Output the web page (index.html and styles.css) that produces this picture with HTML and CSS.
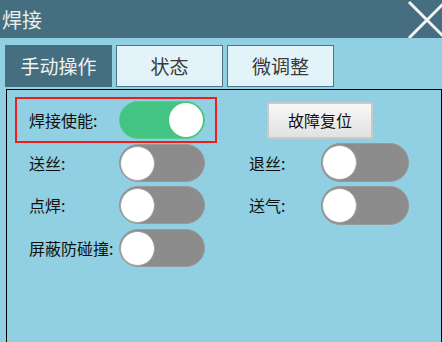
FILE: index.html
```html
<!DOCTYPE html>
<html lang="zh-CN">

<head>
    <meta charset="UTF-8">
    <title>焊接</title>
    <link rel="stylesheet" href="styles.css">
</head>

<body>
    <div class="titlebar">
        <span class="title">焊接</span>
        <svg class="close" width="35" height="38" viewBox="0 0 35 38">
            <line x1="2" y1="2" x2="38" y2="38" />
            <line x1="38" y1="2" x2="2" y2="38" />
        </svg>
    </div>

    <div class="tabs">
        <a href="javascript:;" class="tab tab_on">手动操作</a>
        <a href="javascript:;" class="tab">状态</a>
        <a href="javascript:;" class="tab">微调整</a>
    </div>

    <div class="panel">
        <div class="row row_l hl">
            <span class="label">焊接使能:</span>
            <span class="switch on"><i></i></span>
        </div>
        <div class="row row_r">
            <a href="javascript:;" class="btn">故障复位</a>
        </div>

        <div class="row row_l">
            <span class="label">送丝:</span>
            <span class="switch"><i></i></span>
        </div>
        <div class="row row_r">
            <span class="label">退丝:</span>
            <span class="switch"><i></i></span>
        </div>

        <div class="row row_l">
            <span class="label">点焊:</span>
            <span class="switch"><i></i></span>
        </div>
        <div class="row row_r">
            <span class="label">送气:</span>
            <span class="switch"><i></i></span>
        </div>

        <div class="row row_l">
            <span class="label">屏蔽防碰撞:</span>
            <span class="switch"><i></i></span>
        </div>
    </div>
</body>

</html>
```

FILE: styles.css
```css
* {
    padding: 0;
    margin: 0;
    box-sizing: border-box;
}

a {
    text-decoration: none;
}

body {
    width: 442px;
    height: 342px;
    overflow: hidden;
    background-color: #90d0e2;
    font-family: "Noto Sans CJK SC", "Noto Sans", sans-serif;
    color: #111;
}

.titlebar {
    display: flex;
    justify-content: space-between;
    align-items: center;
    height: 38px;
    background-color: #456f80;
}

.title {
    padding-left: 2px;
    font-size: 20px;
    color: #ececec;
}

.close {
    display: block;
    align-self: flex-start;
}

.close line {
    stroke: #f4f4f4;
    stroke-width: 3;
}

.tabs {
    display: flex;
    gap: 4px;
    margin-top: 7px;
    padding-left: 5px;
}

.tab {
    width: 107px;
    height: 42px;
    line-height: 40px;
    text-align: center;
    font-size: 19px;
    color: #3a3a3a;
    background-color: #e2f3f9;
    border: 1px solid #4d7585;
}

.tab_on {
    color: #f2f2f2;
    background-color: #456f80;
    border-color: #456f80;
}

/* 面板底边在窗口外 */
.panel {
    display: grid;
    grid-template-columns: 194px 1fr;
    grid-auto-rows: 38px;
    column-gap: 26px;
    row-gap: 4.5px;
    width: 436px;
    height: 253px;
    margin: 2px 0 0 6px;
    padding: 11px 0 0 12px;
    border: 1px solid #000;
    border-bottom: none;
}

.row {
    display: flex;
    align-items: center;
}

.row_l {
    grid-column: 1;
}

.row_r {
    grid-column: 2;
}

.hl {
    outline: 2px solid #ee1c1c;
    outline-offset: 2px;
}

.label {
    padding-left: 10px;
    font-size: 16px;
}

.row_l .label {
    width: 100px;
}

.row_r .label {
    width: 82px;
}

.btn {
    width: 106px;
    height: 37px;
    margin-left: 28px;
    line-height: 33px;
    text-align: center;
    font-size: 16px;
    color: #111;
    border: 2px solid #c9c9c9;
    border-radius: 2px;
    background: linear-gradient(#f7f7f7, #e2e2e2);
}

.switch {
    position: relative;
    display: block;
    width: 86px;
    height: 38px;
    border-radius: 19px;
    border: 1px solid #999;
    background-color: #8c8c8c;
}

.row_r .switch {
    width: 88px;
    height: 39px;
}

.switch i {
    position: absolute;
    top: 1px;
    left: 0;
    width: 35px;
    height: 35px;
    border-radius: 50%;
    border: 1px solid #a0a0a0;
    background-color: #fff;
}

.switch.on {
    border-color: #52cc90;
    background-color: #44c483;
}

.switch.on i {
    top: 1px;
    left: auto;
    right: 1px;
    width: 34px;
    height: 34px;
    border: none;
}
```
